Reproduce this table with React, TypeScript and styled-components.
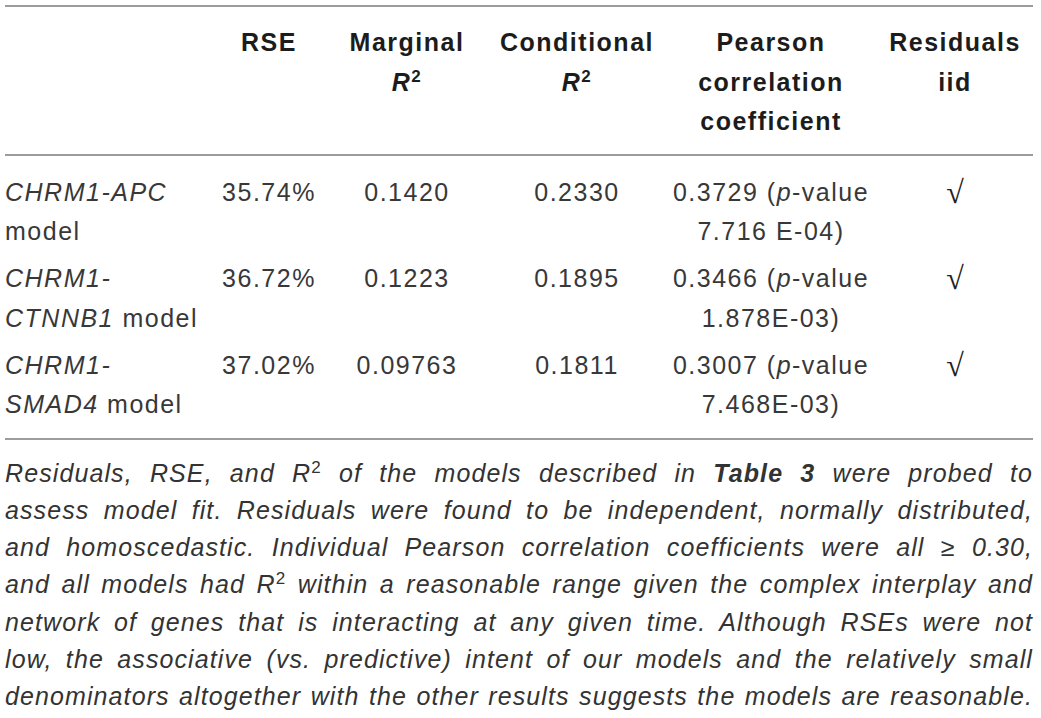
import React from 'react';
import styled, { createGlobalStyle } from 'styled-components';

const GlobalStyle = createGlobalStyle`
  html, body { margin: 0; padding: 0; background: #fff; }
  body { font-family: "Liberation Sans", Arial, sans-serif; }
`;

const Page = styled.div`
  width: 1028px;
  padding: 5px 8px 0 5px;
`;

const COLS = '208px 112px 164px 176px 212px 156px';

const Head = styled.div`
  display: grid;
  grid-template-columns: ${COLS};
  border-top: 2px solid #9c9c9c;
  border-bottom: 2px solid #9c9c9c;
  padding: 16px 0 12px;
`;

const HeadCell = styled.div<{ $align?: string }>`
  font-size: 25px;
  line-height: 39.5px;
  font-weight: 700;
  color: #1c1c1c;
  letter-spacing: 1.5px;
  text-align: ${(p) => p.$align || 'center'};
`;

const Body = styled.div`
  display: flex;
  flex-direction: column;
  gap: 7.5px;
  padding: 17px 0 13px;
  border-bottom: 2px solid #9c9c9c;
`;

const Row = styled.div`
  display: grid;
  grid-template-columns: ${COLS};
`;

const Cell = styled.div<{ $align?: string }>`
  font-size: 25px;
  line-height: 39.5px;
  color: #383838;
  letter-spacing: 1.5px;
  text-align: ${(p) => p.$align || 'center'};
`;

const Check = styled.span`
  font-family: "Liberation Serif", serif;
  font-size: 32px;
  color: #222;
  letter-spacing: 0;
`;

const Caption = styled.p`
  margin: 0;
  padding-top: 15px;
  font-size: 25px;
  line-height: 37.3px;
  font-style: italic;
  color: #333;
  letter-spacing: 1.1px;
  word-spacing: -3px;
  text-align: justify;
  text-align-last: justify;
`;

const Sup = styled.sup`
  font-size: 0.68em;
  font-style: normal;
  vertical-align: 0.55em;
  line-height: 0;
`;

const R2 = () => (
  <>
    <i>R</i>
    <Sup>2</Sup>
  </>
);

type RowData = { label: React.ReactNode; rse: string; marginal: string; conditional: string; pearson: string; pval: string };

const rows: RowData[] = [
  {
    label: (<><i>CHRM1-APC</i><br />model</>),
    rse: '35.74%', marginal: '0.1420', conditional: '0.2330', pearson: '0.3729', pval: '7.716 E-04)',
  },
  {
    label: (<><i>CHRM1-</i><br /><i>CTNNB1</i> model</>),
    rse: '36.72%', marginal: '0.1223', conditional: '0.1895', pearson: '0.3466', pval: '1.878E-03)',
  },
  {
    label: (<><i>CHRM1-</i><br /><i>SMAD4</i> model</>),
    rse: '37.02%', marginal: '0.09763', conditional: '0.1811', pearson: '0.3007', pval: '7.468E-03)',
  },
];

export default function App() {
  return (
    <Page>
      <GlobalStyle />
      <Head>
        <HeadCell />
        <HeadCell>RSE</HeadCell>
        <HeadCell>Marginal<br /><R2 /></HeadCell>
        <HeadCell>Conditional<br /><R2 /></HeadCell>
        <HeadCell>Pearson<br />correlation<br />coefficient</HeadCell>
        <HeadCell>Residuals<br />iid</HeadCell>
      </Head>
      <Body>
        {rows.map((r, i) => (
          <Row key={i}>
            <Cell $align="left">{r.label}</Cell>
            <Cell>{r.rse}</Cell>
            <Cell>{r.marginal}</Cell>
            <Cell>{r.conditional}</Cell>
            <Cell>{r.pearson} (<i>p</i>-value<br />{r.pval}</Cell>
            <Cell><Check>√</Check></Cell>
          </Row>
        ))}
      </Body>
      <Caption>
        Residuals, RSE, and <R2 /> of the models described in <b>Table 3</b> were probed to<br />
        assess model fit. Residuals were found to be independent, normally distributed,<br />
        and homoscedastic. Individual Pearson correlation coefficients were all ≥ 0.30,<br />
        and all models had <R2 /> within a reasonable range given the complex interplay and<br />
        network of genes that is interacting at any given time. Although RSEs were not<br />
        low, the associative (vs. predictive) intent of our models and the relatively small<br />
        denominators altogether with the other results suggests the models are reasonable.
      </Caption>
    </Page>
  );
}
